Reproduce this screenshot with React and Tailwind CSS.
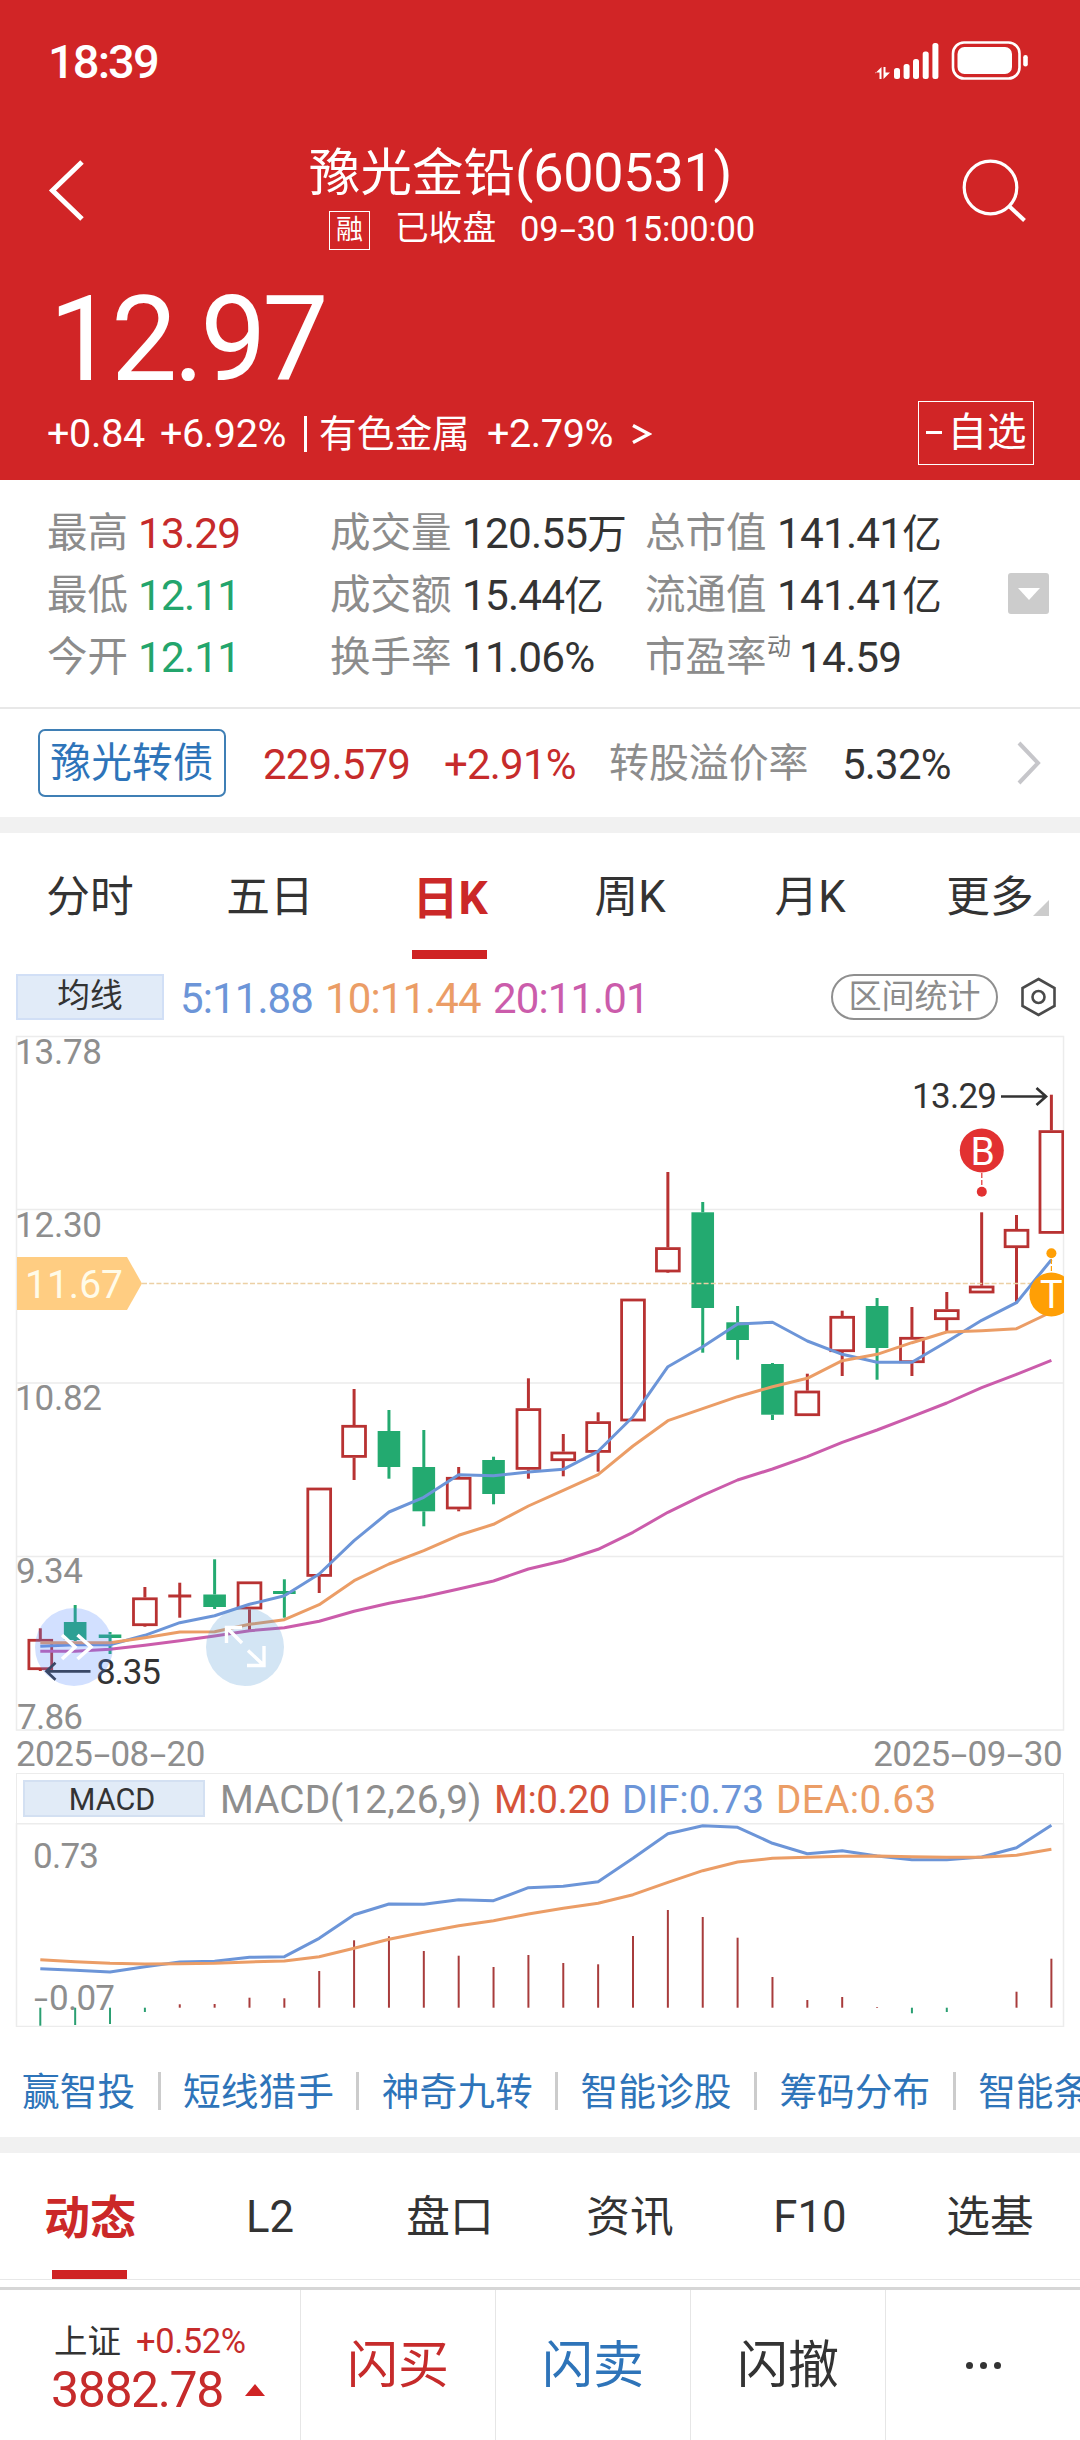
import React from "react";

const RED = "#b83232";
const GREEN = "#23aa70";

const STEP = 34.865;
const X0 = 40.3;
const cx = (i) => X0 + i * STEP;

// [up, high, bodyTop, bodyBottom, low]
const CANDLES = [
  [1, 1628.3, 1639, 1670, 1671],
  [0, 1605, 1622, 1640, 1641],
  [0, 1632, 1634.5, 1638, 1654],
  [1, 1587, 1597.5, 1626, 1626.7],
  [1, 1582.7, 1596, 1596, 1617.7],
  [0, 1559.3, 1594.5, 1607, 1609],
  [1, 1581.5, 1581.5, 1609.3, 1630],
  [0, 1579.3, 1591, 1594, 1617.7],
  [1, 1487.7, 1487.7, 1576.7, 1593],
  [1, 1389, 1425, 1457.7, 1480],
  [0, 1410, 1431, 1467, 1478.7],
  [0, 1430, 1467, 1511.3, 1526.3],
  [1, 1467, 1477, 1509.3, 1511.3],
  [0, 1456.7, 1460, 1494, 1504.3],
  [1, 1378.3, 1408.3, 1469.7, 1478.7],
  [1, 1434, 1451.7, 1461, 1476.3],
  [1, 1412.3, 1421.3, 1452.7, 1471.7],
  [1, 1298.7, 1298.7, 1421.3, 1421.3],
  [1, 1172, 1247.3, 1272.3, 1273],
  [0, 1202, 1212.3, 1308, 1352.7],
  [0, 1306, 1322.3, 1340, 1359.7],
  [0, 1363, 1364, 1414.7, 1420],
  [1, 1373.7, 1390.7, 1416, 1416],
  [1, 1310.7, 1316, 1352, 1376],
  [0, 1298, 1306, 1348, 1379.7],
  [1, 1307, 1337, 1363, 1376],
  [1, 1292, 1309.3, 1320, 1333],
  [1, 1212.3, 1285.7, 1293.3, 1293.3],
  [1, 1215, 1229, 1248, 1301.7],
  [1, 1094.7, 1130.3, 1233.7, 1233.7],
];

const MA5 = [1646.3, 1644.7, 1644.7, 1635.3, 1622.7, 1615.7, 1604.3, 1595.7, 1574, 1540.7, 1512, 1497.3, 1474.7, 1475.7, 1472, 1469.3, 1451.3, 1416.7, 1366.7, 1346.7, 1324, 1322.3, 1341, 1354.3, 1362.3, 1362.3, 1341.7, 1320.3, 1302.7, 1259.7];
const MA10 = [1642.7, 1642.7, 1642.7, 1637.7, 1632, 1631.7, 1624.3, 1619.7, 1604.7, 1580.7, 1564, 1550.7, 1535.3, 1524.3, 1506, 1490.3, 1474.7, 1446, 1420.7, 1408.7, 1396.7, 1386.7, 1378.3, 1360.7, 1354.3, 1342.7, 1332, 1330.7, 1328.7, 1312];
const MA20 = [1651.3, 1651.3, 1649.3, 1645.3, 1640.7, 1636, 1630.7, 1627.7, 1621.3, 1611.3, 1603.3, 1596.7, 1589, 1581, 1569, 1560.7, 1549.3, 1532.3, 1512.3, 1495.3, 1480, 1469, 1456.7, 1442.3, 1430, 1416.7, 1403, 1387.7, 1374.3, 1360.3];
const DIF = [1968.7, 1970.3, 1972, 1966.7, 1962, 1961.3, 1957.3, 1956.7, 1938.3, 1914.7, 1904, 1904.3, 1899.7, 1900.7, 1887.7, 1886.3, 1881.7, 1858.3, 1833.7, 1825.7, 1827.3, 1843.3, 1853.7, 1850.7, 1856, 1859.7, 1859.7, 1857, 1847.7, 1825.3];
const DEA = [1959.7, 1961.7, 1963.3, 1964, 1963.7, 1963.3, 1962, 1961, 1956.7, 1948.3, 1939.3, 1932.3, 1925.7, 1920.7, 1914, 1908.3, 1903.3, 1894.7, 1882.3, 1870.7, 1862, 1858.3, 1857.3, 1856.3, 1856, 1856.7, 1857.3, 1857.3, 1855.3, 1849.3];
const BARS = [2025.7, 2025, 2024, 2012, 2004.3, 2004, 1997.7, 1998.3, 1971, 1940.3, 1936.3, 1951, 1955.7, 1967, 1955, 1963, 1964.3, 1936, 1910, 1917, 1937.7, 1977, 2000, 1997, 2007, 2013.3, 2012, 2007.7, 1991.7, 1958.7];
const BASE = 2007.7;

const points = (ys) => ys.map((y, i) => `${cx(i).toFixed(1)},${y}`).join(" ");

function Line({ ys, color }) {
  return <polyline points={points(ys)} fill="none" stroke={color} strokeWidth="3" strokeLinejoin="round" />;
}

function Candle({ i, data }) {
  const [up, high, top, bottom, low] = data;
  const x = cx(i);
  const c = up ? RED : GREEN;
  return (
    <g stroke={c} strokeWidth="3">
      {high < top && <line x1={x} x2={x} y1={high} y2={top} />}
      {low > bottom && <line x1={x} x2={x} y1={bottom} y2={low} />}
      {up && bottom > top && (
        <rect x={x - 11.4} y={top + 1.3} width="22.8" height={bottom - top - 2.6} fill="none" strokeWidth="2.8" />
      )}
      {up && bottom === top ? <line x1={x - 11.5} x2={x + 11.5} y1={top} y2={top} /> : null}
      {!up && <rect x={x - 11.3} y={top} width="22.6" height={bottom - top} fill={GREEN} stroke="none" />}
    </g>
  );
}

function AxisText({ x, y, w, children, size = 35, fill = "#8e8e8e" }) {
  return (
    <text x={x} y={y} fontSize={size} fill={fill} textLength={w} lengthAdjust="spacing">
      {children}
    </text>
  );
}

function PriceChart() {
  return (
    <svg className="block h-[704px] w-[1080px]" viewBox="0 1030 1080 704">
      <defs>
        <clipPath id="plot">
          <rect x="16" y="1030" width="1048" height="704" />
        </clipPath>
      </defs>
      <g stroke="#ececec" strokeWidth="1.5" fill="none">
        <rect x="16.5" y="1036.5" width="1047" height="693.5" />
        <path d="M16 1209.5H1064M16 1383H1064M16 1556.5H1064" />
      </g>
      <AxisText x={15} y={1064} w={87}>13.78</AxisText>
      <AxisText x={15} y={1236.7} w={87}>12.30</AxisText>
      <AxisText x={15} y={1409.7} w={87}>10.82</AxisText>
      <AxisText x={16} y={1583} w={67}>9.34</AxisText>
      <AxisText x={17} y={1728.7} w={66}>7.86</AxisText>
      <g clipPath="url(#plot)">
        {CANDLES.map((d, i) => (
          <Candle key={i} i={i} data={d} />
        ))}
        <path d="M142 1283.5H1064" stroke="#ecd0a4" strokeWidth="1.5" strokeDasharray="5 2.2" />
        <Line ys={MA5} color="#6c95d8" />
        <Line ys={MA10} color="#eb9d66" />
        <Line ys={MA20} color="#cb5cab" />
        <path d="M981.8 1173V1187" stroke="#e23131" strokeWidth="1.2" strokeDasharray="5 2" />
        <circle cx="981.8" cy="1150.5" r="22" fill="#e23131" />
        <circle cx="981.8" cy="1191.7" r="5" fill="#e23131" />
        <text x="970.5" y="1165" fontSize="39" fill="#fff">B</text>
        <path d="M1051.4 1259V1273" stroke="#ff9f05" strokeWidth="1.2" strokeDasharray="5 2" />
        <circle cx="1051.4" cy="1294.5" r="22" fill="#ff9f05" />
        <circle cx="1051.4" cy="1253.3" r="5" fill="#ff9f05" />
        <text x="1040" y="1308" fontSize="38" fill="#fff">T</text>
      </g>
      <path d="M17 1257H127L142 1283.5L127 1310H17Z" fill="#ffcd82" />
      <AxisText x={25} y={1298} w={98} size={39} fill="#fffbe8">11.67</AxisText>
      <AxisText x={912} y={1108.3} w={85} fill="#333">13.29</AxisText>
      <path d="M1001 1096.5H1046M1036.5 1088L1046 1096.5L1036.5 1105" fill="none" stroke="#333" strokeWidth="2.7" />
      <AxisText x={96} y={1684} w={65} fill="#333">8.35</AxisText>
      <path d="M90.5 1671.3H46.5M55.5 1662.8L46.5 1671.3L55.5 1679.8" fill="none" stroke="#333" strokeWidth="2.7" />
    </svg>
  );
}

function MacdChart() {
  return (
    <svg className="block h-[204px] w-[1080px]" viewBox="0 1823 1080 204">
      <path d="M16.5 1823V2026.5H1063.5V1823M16 1823.7H1064" fill="none" stroke="#ececec" strokeWidth="1.5" />
      <AxisText x={33} y={1868} w={66}>0.73</AxisText>
      <text y="2010" fontSize="35" fill="#8e8e8e">
        <tspan x="34" textLength="14" lengthAdjust="spacingAndGlyphs">-</tspan>
        <tspan x="49" textLength="66">0.07</tspan>
      </text>
      {BARS.map((y, i) => (
        <line key={i} x1={cx(i)} x2={cx(i)} y1={BASE} y2={y} stroke={y > BASE ? "#2b9f72" : "#a83c3c"} strokeWidth="2" />
      ))}
      <Line ys={DIF} color="#6c95d8" />
      <Line ys={DEA} color="#eb9d66" />
    </svg>
  );
}

function Dash() {
  return <span className="mx-[4.5px] inline-block scale-x-[1.7]">-</span>;
}

function StatusBar() {
  return (
    <div className="flex h-[123px] items-center justify-between pt-[2px] pr-[50px] pl-[48px]">
      <span className="text-[47px] font-medium tracking-[-1.9px]">18:39</span>
      <svg className="-mt-[2px] h-[44px] w-[158px]" viewBox="872 40 158 44" fill="#fff">
        <path d="M875 72.5H879.5V79H881.5V67L875 73.5ZM883.5 67V79L890 72.5H885.5V67Z" />
        <rect x="894" y="68" width="6" height="11" rx="2.5" />
        <rect x="903.6" y="64" width="6" height="15" rx="2.5" />
        <rect x="913" y="59" width="6" height="20" rx="2.5" />
        <rect x="922.7" y="51.5" width="6" height="27.5" rx="2.5" />
        <rect x="932.4" y="43" width="6" height="36" rx="2.5" />
        <rect x="953" y="42.5" width="66.5" height="36" rx="11" fill="none" stroke="#fff" strokeWidth="2.6" />
        <rect x="957.5" y="47" width="54.5" height="27" rx="7" />
        <rect x="1023.2" y="55" width="4.6" height="11.5" rx="2.3" />
      </svg>
    </div>
  );
}

function Header() {
  return (
    <header className="h-[480px] bg-[#d12526] text-white">
      <StatusBar />
      <div className="flex h-[137px] justify-between pr-[52px] pl-[46px]">
        <svg className="mt-[35px] h-[64px] w-[40px]" viewBox="46 158 40 64">
          <path d="M82 162L52.5 190.5L82 219" fill="none" stroke="#fff" strokeWidth="5" />
        </svg>
        <div className="flex w-[500px] flex-col">
          <div className="mt-[20px] ml-[36px] h-[60px] text-[51.5px] leading-[60px] whitespace-nowrap">
            豫光金铅<span className="text-[54px] tracking-[-0.3px]">(600531)</span>
          </div>
          <div className="ml-[56px] flex h-[52px] items-center text-[34px] leading-[52px] whitespace-nowrap">
            <span className="mt-[2px] flex h-[39px] w-[41px] items-center justify-center border border-white text-[27px] leading-none">融</span>
            <span className="ml-[25px] text-[33.7px]">已收盘</span>
            <span className="ml-[24px] text-[34.5px] tracking-[-0.2px]">
              09<Dash />30 15:00:00
            </span>
          </div>
        </div>
        <svg className="mt-[33px] h-[68px] w-[68px]" viewBox="960 156 68 68" fill="none" stroke="#fff">
          <circle cx="990.5" cy="187.5" r="26.3" strokeWidth="3.2" />
          <path d="M1009 206L1024.5 220.5" strokeWidth="4" />
        </svg>
      </div>
      <div className="h-[140px] pt-[17px] pl-[49px] text-[118px] leading-[126px] tracking-[-4.2px]">12.97</div>
      <div className="flex h-[65px] items-center pr-[46px] pl-[47px] text-[39.5px] whitespace-nowrap">
        <span className="mt-[3px] w-[113px] tracking-[-0.3px]">+0.84</span>
        <span className="mt-[3px] w-[144px] tracking-[-0.4px]">+6.92%</span>
        <span className="mt-[2px] h-[36px] w-[3px] bg-white" />
        <span className="mt-[3px] ml-[12px] w-[168px] text-[37.7px]">有色金属</span>
        <span className="mt-[3px] w-[143px] tracking-[-0.4px]">+2.79%</span>
        <svg className="mt-[3px] h-[24px] w-[22px]" viewBox="0 0 22 24" fill="none" stroke="#fff" strokeWidth="3.4">
          <path d="M3 3.5L19 12L3 20.5" />
        </svg>
        <span className="ml-auto flex h-[64px] w-[116px] items-center justify-center border border-white text-[39.5px]">
          <span className="mr-[6px] h-[3px] w-[16px] bg-white" />
          自选
        </span>
      </div>
    </header>
  );
}

const STATS = [
  [["最高", "13.29", "", "text-[#c62b2b]"], ["成交量", "120.55", "万"], ["总市值", "141.41", "亿"]],
  [["最低", "12.11", "", "text-[#23a56c]"], ["成交额", "15.44", "亿"], ["流通值", "141.41", "亿"]],
  [["今开", "12.11", "", "text-[#23a56c]"], ["换手率", "11.06%", ""], ["市盈率", "14.59", "", "", "动"]],
];

function Stat({ item, labelClass }) {
  const [label, value, unit, color, sup] = item;
  return (
    <div className="flex h-[62px] items-center whitespace-nowrap">
      <span className={`shrink-0 text-[40.5px] text-[#8c8c8c] ${labelClass}`}>{label}</span>
      {sup && <span className="-mt-[22px] mr-[8px] -ml-[10px] text-[24px] leading-none text-[#777]">{sup}</span>}
      <span className={`text-[42.3px] tracking-[-0.8px] ${color || "text-[#333]"}`}>
        {value}
        <span className="text-[39.5px]">{unit}</span>
      </span>
    </div>
  );
}

function Stats() {
  return (
    <section className="flex h-[229px] items-center border-b-2 border-[#e8e8e8]">
      <div className="grid grid-cols-[283px_315px_361px] pt-[4px] pl-[47px]">
        {STATS.map((row, r) =>
          row.map((item, c) => <Stat key={`${r}${c}`} item={item} labelClass={c === 0 ? "w-[91px]" : "w-[132px]"} />)
        )}
      </div>
      <span className="ml-[2px] flex h-[41px] w-[41px] items-center justify-center rounded-[3px] bg-[#ccc]">
        <svg className="h-[12px] w-[22px]" viewBox="0 0 22 12">
          <path d="M0 0H22L11 12Z" fill="#fff" />
        </svg>
      </span>
    </section>
  );
}

function Bond() {
  return (
    <section className="flex h-[108px] items-center pl-[38px] text-[42px] tracking-[-0.8px] whitespace-nowrap">
      <span className="flex h-[68px] w-[188px] items-center justify-center rounded-[7px] border-2 border-[#3f7fb5] pt-[2px] text-[40.7px] tracking-normal text-[#2e74b9]">豫光转债</span>
      <span className="mt-[2px] ml-[37px] w-[181px] text-[#c62b2b]">229.579</span>
      <span className="mt-[2px] w-[165px] text-[#c62b2b]">+2.91%</span>
      <span className="mt-[2px] w-[233px] text-[39.9px] tracking-normal text-[#8c8c8c]">转股溢价率</span>
      <span className="mt-[2px] w-[174px] text-[#333]">5.32%</span>
      <svg className="h-[44px] w-[26px]" viewBox="0 0 26 44" fill="none" stroke="#c6c6ca" strokeWidth="4">
        <path d="M3 2L22 22L3 42" />
      </svg>
    </section>
  );
}

function Tabs({ items, active }) {
  return (
    <nav className="grid h-[126px] grid-cols-6 text-[43.7px] text-[#333]">
      {items.map((t, i) => (
        <div key={t} className={`relative flex items-center justify-center pt-[4px] ${i === active ? "text-[46px] font-bold text-[#cb2828]" : ""}`}>
          {t}
          {i === active && <span className="absolute bottom-0 left-[52px] h-[9px] w-[75px] bg-[#cf2324]" />}
          {t === "更多" && (
            <svg className="absolute right-[31px] bottom-[43px] h-[16px] w-[16px]" viewBox="0 0 16 16">
              <path d="M16 0V16H0Z" fill="#ccc" />
            </svg>
          )}
        </div>
      ))}
    </nav>
  );
}

function MaBar() {
  return (
    <div className="flex h-[71px] items-center pt-[5px] pl-[16px] text-[42px] tracking-[-0.9px] whitespace-nowrap">
      <span className="flex h-[46px] w-[148px] items-center justify-center border-2 border-[#d1dff6] bg-[#e1ebf8] text-[32.7px] tracking-normal text-[#333]">均线</span>
      <span className="mt-[2px] ml-[16px] w-[145px] text-[#6c95d8]">5:11.88</span>
      <span className="mt-[2px] w-[168px] text-[#eb9d66]">10:11.44</span>
      <span className="mt-[2px] w-[338px] text-[#cb5cab]">20:11.01</span>
      <span className="flex h-[46px] w-[167px] items-center justify-center rounded-full border-2 border-[#8f8f8f] text-[33px] tracking-normal text-[#8c8c8c]">区间统计</span>
      <svg className="ml-[22px] h-[40px] w-[38px]" viewBox="0 0 38 40" fill="none" stroke="#4a4a4a" strokeWidth="2.6">
        <path d="M18.5 2L34.5 11V29L18.5 38L2.5 29V11Z" />
        <circle cx="18.5" cy="20" r="6" />
      </svg>
    </div>
  );
}

function Charts() {
  return (
    <section>
      <div className="relative">
        <PriceChart />
        <span className="absolute top-[578px] left-[35px] h-[78px] w-[78px] rounded-full bg-[#4d85ff]/25">
          <svg className="h-full w-full" viewBox="0 0 78 78" fill="none" stroke="#fff" strokeWidth="3.6">
            <path d="M27 27L40 39L27 51M42.5 27L56 39L42.5 51" />
          </svg>
        </span>
        <span className="absolute top-[578px] left-[206px] h-[78px] w-[78px] rounded-full bg-[#5197d2]/25">
          <svg className="h-full w-full" viewBox="0 0 78 78" fill="none" stroke="#fff" strokeWidth="3.4">
            <path d="M36 35L20.5 19.5M20.5 35V19.5H36M42 42.5L58 57.5M58 38V57.5H41" />
          </svg>
        </span>
      </div>
      <div className="flex h-[39px] items-center justify-between pt-[2px] pr-[18px] pl-[16px] text-[35px] leading-[37px] tracking-[-0.6px] text-[#8e8e8e]">
        <span>2025<Dash />08<Dash />20</span>
        <span>2025<Dash />09<Dash />30</span>
      </div>
      <div className="mr-[16px] ml-[16px] flex h-[50px] items-center border border-b-0 border-[#ececec] pl-[6px] text-[38.7px] whitespace-nowrap">
        <span className="flex h-[37px] w-[182px] items-center justify-center border-2 border-[#d3e0f2] bg-[#e1ebf7] pt-[2px] pr-[4px] text-[30.5px] text-[#333]">MACD</span>
        <span className="mt-[3px] ml-[15px] w-[274px] tracking-[0.1px] text-[#8e8e8e]">MACD(12,26,9)</span>
        <span className="mt-[3px] w-[128px] tracking-[-0.4px] text-[#d5533a]">M:0.20</span>
        <span className="mt-[3px] w-[154px] text-[#6c95d8]">DIF:0.73</span>
        <span className="mt-[3px] tracking-[0.4px] text-[#eb9d66]">DEA:0.63</span>
      </div>
      <MacdChart />
    </section>
  );
}

const LINKS = ["赢智投", "短线猎手", "神奇九转", "智能诊股", "筹码分布", "智能条件单"];

function QuickLinks() {
  return (
    <div className="flex h-[110px] items-center overflow-hidden pl-[22px] text-[37.7px] whitespace-nowrap text-[#2e74b9]">
      {LINKS.map((t, i) => (
        <React.Fragment key={t}>
          {i > 0 && <span className="mt-[18px] mr-[22.5px] ml-[22.5px] h-[38px] w-[3px] shrink-0 bg-[#ccc]" />}
          <span className="mt-[20px] shrink-0">{t}</span>
        </React.Fragment>
      ))}
    </div>
  );
}

function BottomBar() {
  return (
    <footer className="flex h-[153px] border-t-[3px] border-[#d6d6d6] text-[51px]">
      <div className="flex w-[301px] flex-col border-r border-[#e6e6e6] pl-[51px] whitespace-nowrap">
        <div className="mt-[31px] flex h-[42px] items-center text-[34.5px]">
          <span className="ml-[3px] w-[82px] text-[33.5px] text-[#333]">上证</span>
          <span className="tracking-[-0.4px] text-[#c62b2b]">+0.52%</span>
        </div>
        <div className="mt-[1px] flex h-[52px] items-center text-[50px] tracking-[-1.4px] text-[#c62b2b]">
          <span className="w-[194px]">3882.78</span>
          <svg className="h-[12px] w-[20px]" viewBox="0 0 20 12">
            <path d="M10 0L20 12H0Z" fill="#cf2324" />
          </svg>
        </div>
      </div>
      <div className="flex w-[195px] items-center justify-center border-r border-[#e6e6e6] pt-[3px] text-[#c62b2b]">闪买</div>
      <div className="flex w-[195px] items-center justify-center border-r border-[#e6e6e6] pt-[3px] text-[#2e74b9]">闪卖</div>
      <div className="flex w-[195px] items-center justify-center border-r border-[#e6e6e6] pt-[3px] text-[#333]">闪撤</div>
      <div className="flex w-[194px] items-center justify-center gap-[7px]">
        <span className="h-[7px] w-[7px] rounded-full bg-[#333]" />
        <span className="h-[7px] w-[7px] rounded-full bg-[#333]" />
        <span className="h-[7px] w-[7px] rounded-full bg-[#333]" />
      </div>
    </footer>
  );
}

export default function App() {
  return (
    <div className="h-[2440px] w-[1080px] overflow-hidden bg-white font-['Roboto','Noto_Sans_CJK_SC',sans-serif]">
      <Header />
      <Stats />
      <Bond />
      <div className="h-[16px] bg-[#f1f1f1]" />
      <Tabs items={["分时", "五日", "日K", "周K", "月K", "更多"]} active={2} />
      <MaBar />
      <Charts />
      <QuickLinks />
      <div className="h-[16px] bg-[#f1f1f1]" />
      <Tabs items={["动态", "L2", "盘口", "资讯", "F10", "选基"]} active={0} />
      <div className="h-[8px] border-t border-[#e8e8e8]" />
      <BottomBar />
    </div>
  );
}
